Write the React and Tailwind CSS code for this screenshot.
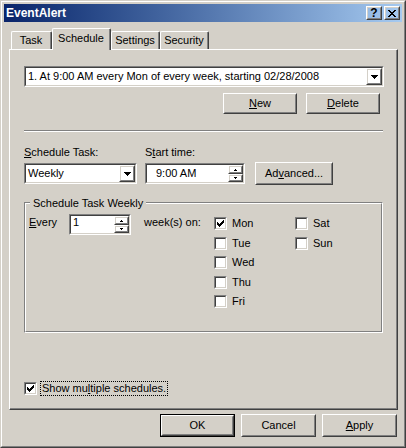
import React from 'react';

function Raised({ className = '', innerClassName = '', children }) {
  return (
    <div className={`border border-t-white border-l-white border-b-[#404040] border-r-[#404040] ${className}`}>
      <div className={`h-full w-full border border-t-[#D4D0C8] border-l-[#D4D0C8] border-b-[#808080] border-r-[#808080] flex items-center justify-center ${innerClassName}`}>
        {children}
      </div>
    </div>
  );
}

function Sunken({ className = '', children }) {
  return (
    <div className={`border border-t-[#808080] border-l-[#808080] border-b-white border-r-white ${className}`}>
      <div className="h-full w-full border border-t-[#404040] border-l-[#404040] border-b-[#D4D0C8] border-r-[#D4D0C8] bg-white flex items-stretch">
        {children}
      </div>
    </div>
  );
}

const DropArrow = () => (
  <svg width="7" height="4" viewBox="0 0 7 4" shapeRendering="crispEdges">
    <rect x="0" y="0" width="7" height="1" fill="#000" />
    <rect x="1" y="1" width="5" height="1" fill="#000" />
    <rect x="2" y="2" width="3" height="1" fill="#000" />
    <rect x="3" y="3" width="1" height="1" fill="#000" />
  </svg>
);

const UpArrow = () => (
  <svg width="3" height="2" viewBox="0 0 3 2" shapeRendering="crispEdges">
    <rect x="1" y="0" width="1" height="1" fill="#000" />
    <rect x="0" y="1" width="3" height="1" fill="#000" />
  </svg>
);

const DownArrow = () => (
  <svg width="3" height="2" viewBox="0 0 3 2" shapeRendering="crispEdges">
    <rect x="0" y="0" width="3" height="1" fill="#000" />
    <rect x="1" y="1" width="1" height="1" fill="#000" />
  </svg>
);

const CloseGlyph = () => (
  <svg width="8" height="7" viewBox="0 0 8 7" shapeRendering="crispEdges">
    <rect x="0" y="0" width="2" height="1" fill="#000" />
    <rect x="6" y="0" width="2" height="1" fill="#000" />
    <rect x="1" y="1" width="2" height="1" fill="#000" />
    <rect x="5" y="1" width="2" height="1" fill="#000" />
    <rect x="2" y="2" width="4" height="1" fill="#000" />
    <rect x="3" y="3" width="2" height="1" fill="#000" />
    <rect x="2" y="4" width="4" height="1" fill="#000" />
    <rect x="1" y="5" width="2" height="1" fill="#000" />
    <rect x="5" y="5" width="2" height="1" fill="#000" />
    <rect x="0" y="6" width="2" height="1" fill="#000" />
    <rect x="6" y="6" width="2" height="1" fill="#000" />
  </svg>
);

const Check = () => (
  <svg width="7" height="7" viewBox="0 0 7 7" shapeRendering="crispEdges">
    <rect x="0" y="2" width="1" height="3" fill="#000" />
    <rect x="1" y="3" width="1" height="3" fill="#000" />
    <rect x="2" y="4" width="1" height="3" fill="#000" />
    <rect x="3" y="3" width="1" height="3" fill="#000" />
    <rect x="4" y="2" width="1" height="3" fill="#000" />
    <rect x="5" y="1" width="1" height="3" fill="#000" />
    <rect x="6" y="0" width="1" height="3" fill="#000" />
  </svg>
);

function CheckBox({ checked }) {
  return (
    <Sunken className="w-[13px] h-[13px] shrink-0">
      <div className="flex-1 flex items-center justify-center">{checked && <Check />}</div>
    </Sunken>
  );
}

function Combo({ className, text }) {
  return (
    <Sunken className={className}>
      <div className="flex-1 flex items-center pl-[2px] leading-[13px] whitespace-nowrap overflow-hidden">{text}</div>
      <Raised className="w-[16px] h-full">
        <DropArrow />
      </Raised>
    </Sunken>
  );
}

function Spin({ className, text, textClass = '' }) {
  return (
    <Sunken className={className}>
      <div className={`flex-1 flex leading-[13px] ${textClass}`}>{text}</div>
      <div className="w-[15px] flex flex-col">
        <Raised className="h-[9px]">
          <UpArrow />
        </Raised>
        <Raised className="flex-1">
          <DownArrow />
        </Raised>
      </div>
    </Sunken>
  );
}

function Button({ children, className = '' }) {
  return (
    <Raised className={`leading-[13px] ${className}`}>
      {children}
    </Raised>
  );
}

function DayRow({ label, checked }) {
  return (
    <div className="h-[19.5px] flex items-start gap-[5px]">
      <CheckBox checked={checked} />
      <span className="leading-[13px]">{label}</span>
    </div>
  );
}

function Tab({ label }) {
  return (
    <div className="mt-[3px] h-[18px] rounded-t-[2px] border-t border-l border-r border-t-white border-l-white border-r-[#404040]">
      <div className="h-full border-r border-r-[#808080] flex items-center justify-center leading-[13px]">
        {label}
      </div>
    </div>
  );
}

export default function App() {
  return (
    <div className="w-[406px] h-[448px] bg-[#D4D0C8] text-black text-[11px] font-['Liberation_Sans',Arial,sans-serif] border border-t-[#D4D0C8] border-l-[#D4D0C8] border-b-[#404040] border-r-[#404040]">
      <div className="h-full border border-t-white border-l-white border-b-[#808080] border-r-[#808080] p-[2px] flex flex-col">
        {/* Title bar */}
        <div className="h-[18px] shrink-0 bg-gradient-to-r from-[#0A246A] to-[#A6CAF0] flex items-start pt-[2px] pr-[2px]">
          <span className="flex-1 pl-[2px] text-white font-bold text-[12px] leading-[13px] mt-[1px]">EventAlert</span>
          <Raised className="w-[16px] h-[14px]">
            <span className="font-bold text-[12px] leading-none">?</span>
          </Raised>
          <Raised className="w-[16px] h-[14px] ml-[2px]">
            <CloseGlyph />
          </Raised>
        </div>

        {/* Tabs */}
        <div className="mt-[6px] h-[21px] pl-[7px] flex items-start">
          <div className="w-[41px]">
            <Tab label="Task" />
          </div>
          <div className="w-[59px] h-[22px] relative z-10 bg-[#D4D0C8] rounded-t-[2px] border-t border-l border-r border-t-white border-l-white border-r-[#404040]">
            <div className="h-full border-r border-r-[#808080] flex justify-center pt-[3px] leading-[13px]">Schedule</div>
          </div>
          <div className="w-[49px]">
            <Tab label="Settings" />
          </div>
          <div className="w-[49px]">
            <Tab label="Security" />
          </div>
        </div>

        {/* Panel */}
        <div className="ml-[5px] w-[389px] h-[361px] border border-t-white border-l-white border-b-[#404040] border-r-[#404040]">
          <div className="h-full border-r border-b border-r-[#808080] border-b-[#808080] pt-[16px] pl-[14px] flex flex-col">
            <Combo className="w-[360px] h-[21px]" text="1. At 9:00 AM every Mon of every week, starting 02/28/2008" />

            <div className="w-[360px] mt-[6px] pr-[4px] flex justify-end gap-[9px]">
              <Button className="w-[74px] h-[21px]">
                <span><u>N</u>ew</span>
              </Button>
              <Button className="w-[74px] h-[21px]">
                <span><u>D</u>elete</span>
              </Button>
            </div>

            <div className="w-[359px] mt-[16px] border-t border-b border-t-[#808080] border-b-white" />

            <div className="mt-[14px] flex leading-[13px]">
              <span className="w-[121px]"><u>S</u>chedule Task:</span>
              <span>S<u>t</u>art time:</span>
            </div>

            <div className="mt-[4px] flex items-start">
              <Combo className="w-[113px] h-[21px]" text="Weekly" />
              <Spin className="ml-[8px] w-[100px] h-[21px]" text="9:00 AM" textClass="items-center pl-[9px]" />
              <Button className="ml-[10px] -mt-[1px] w-[78px] h-[23px]">
                <span>Ad<u>v</u>anced...</span>
              </Button>
            </div>

            {/* Group box */}
            <div className="mt-[17px] w-[359px] h-[131px] border border-t-[#808080] border-l-[#808080] border-b-white border-r-white">
              <div className="h-full border border-t-white border-l-white border-b-[#808080] border-r-[#808080]">
                <div className="-mt-[7px] ml-[4px] w-fit px-[3px] bg-[#D4D0C8] leading-[13px]">Schedule Task Weekly</div>
                <div className="mt-[4px] pl-[3px] flex items-start">
                  <span className="w-[40px] mt-[2px] leading-[13px]"><u>E</u>very</span>
                  <Spin className="w-[62px] h-[21px]" text="1" textClass="items-start pl-[2px]" />
                  <span className="ml-[13px] w-[70px] mt-[2px] leading-[13px]">week(s) on:</span>
                  <div className="mt-[3px] w-[81px] flex flex-col">
                    <DayRow label="Mon" checked />
                    <DayRow label="Tue" />
                    <DayRow label="Wed" />
                    <DayRow label="Thu" />
                    <DayRow label="Fri" />
                  </div>
                  <div className="mt-[3px] flex flex-col">
                    <DayRow label="Sat" />
                    <DayRow label="Sun" />
                  </div>
                </div>
              </div>
            </div>

            <div className="mt-[48px] flex items-center gap-[3px]">
              <CheckBox checked />
              <span className="border border-dotted border-black px-[1px] leading-[13px]">
                Show mu<u>l</u>tiple schedules.
              </span>
            </div>
          </div>
        </div>

        {/* Bottom buttons */}
        <div className="mt-[4px] mr-[5px] flex justify-end gap-[6px]">
          <div className="w-[75px] h-[23px] border border-black">
            <Button className="w-full h-full">OK</Button>
          </div>
          <Button className="w-[75px] h-[23px]">Cancel</Button>
          <Button className="w-[75px] h-[23px]">
            <span><u>A</u>pply</span>
          </Button>
        </div>
      </div>
    </div>
  );
}
